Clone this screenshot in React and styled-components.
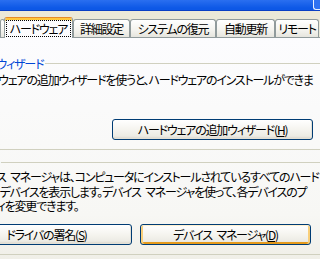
import React from 'react'
import styled, { createGlobalStyle } from 'styled-components'

const GlobalStyle = createGlobalStyle`
  html, body {
    margin: 0;
    padding: 0;
    background: #ece9d8;
  }
  * {
    box-sizing: border-box;
  }
`

// the dialog is cropped on the left: how far its groups reach past the edge
const CROP = 100

const Frame = styled.div`
  width: 320px;
  height: 259px;
  overflow: hidden;
  display: flex;
  flex-direction: column;
  background: #ece9d8;
  font-family: "Noto Sans CJK JP", "Noto Sans", sans-serif;
  font-size: 12px;
  font-feature-settings: "palt";
  letter-spacing: -1.2px;
  word-spacing: 3px;
  color: #000;
`

const CaptionBar = styled.div`
  height: 11px;
  flex: none;
  display: flex;
  justify-content: flex-end;
  align-items: flex-start;
  background: linear-gradient(180deg, #2a6ff0 0%, #0d58e6 80%);
  border-bottom: 1px solid #0a3fc4;
`

const CaptionButton = styled.div`
  width: 8px;
  height: 10px;
  margin-right: -1px;
  border-left: 1px solid #e8efff;
  border-bottom: 1px solid #e8efff;
  border-bottom-left-radius: 3px;
  background: #2f72f2;
`

const TabStrip = styled.div`
  height: 20px;
  margin-top: 6px;
  flex: none;
  display: flex;
  align-items: flex-end;
`

const Tab = styled.div`
  width: ${p => p.$width}px;
  height: ${p => (p.$active ? 21 : 18)}px;
  flex: none;
  display: flex;
  align-items: center;
  justify-content: center;
  white-space: nowrap;
  overflow: hidden;
  border: 1px solid #919b9c;
  border-bottom: none;
  border-radius: 3px 3px 0 0;
  background: linear-gradient(180deg, #ffffff 0%, #f4f3ee 60%, #e6e5de 100%);

  ${p =>
    p.$active &&
    `
    position: relative;
    z-index: 1;
    margin-left: -1px;
    margin-bottom: -1px;
    border-top: 1px solid #e68b2c;
    box-shadow: inset 0 2px 0 #ffc73c;
    background: #fcfcfe;
    padding-top: 1px;
  `}
`

const FocusLabel = styled.span`
  display: block;
  width: 65px;
  height: 17px;
  line-height: 15px;
  text-align: center;
  border: 1px dotted #000;
`

const Panel = styled.div`
  flex: 1;
  display: flex;
  flex-direction: column;
  border-top: 1px solid #919b9c;
  background: linear-gradient(180deg, #fcfcfe 0%, #f7f7f4 80%, #f0efe8 100%);
`

const Group = styled.div`
  margin: ${p => p.$top}px -6px 0 -${CROP}px;
  padding-right: ${p => p.$right + 6}px;
  border-bottom: 1px solid #d0d0bf;
  display: flex;
  flex-direction: column;
`

const GroupHeader = styled.div`
  height: 15px;
  display: flex;
  align-items: center;
  margin-right: -${p => p.$right + 6}px;
`

const Legend = styled.span`
  margin-left: 7px;
  padding-right: 2px;
  color: #0046d5;
  white-space: nowrap;
  line-height: 15px;
`

const Rule = styled.div`
  flex: 1;
  height: 1px;
  background: #d0d0bf;
`

const Description = styled.p`
  margin: ${p => p.$top}px 0 0 ${p => p.$indent}px;
  line-height: 14.5px;
  white-space: nowrap;
`

const ButtonRow = styled.div`
  margin-top: ${p => p.$top}px;
  padding-bottom: 9px;
  display: flex;
  justify-content: flex-end;
  gap: 8px;
`

const Button = styled.button`
  width: ${p => p.$width}px;
  height: 21px;
  padding: 0;
  flex: none;
  font: inherit;
  letter-spacing: inherit;
  word-spacing: inherit;
  color: #000;
  white-space: nowrap;
  border: 1px solid #003c74;
  border-radius: 3px;
  background: linear-gradient(180deg, #ffffff 0%, #f5f4ef 50%, #ecebe4 85%, #d8d2c6 100%);
  box-shadow: ${p =>
    p.$hot
      ? 'inset 0 1px 0 #fff0cf, inset 2px 0 0 #f9cf7a, inset -2px 0 0 #f9cf7a, inset 0 -2px 0 #e59a1c'
      : 'inset -1px -1px 0 #e3e0d6'};

  u {
    text-decoration: underline;
    text-underline-offset: 1px;
  }
`

export default function App() {
  return (
    <Frame>
      <GlobalStyle />
      <CaptionBar>
        <CaptionButton />
      </CaptionBar>

      <TabStrip>
        <Tab $width={5} />
        <Tab $width={69} $active>
          <FocusLabel>ハードウェア</FocusLabel>
        </Tab>
        <Tab $width={57}>詳細設定</Tab>
        <Tab $width={86}>システムの復元</Tab>
        <Tab $width={59}>自動更新</Tab>
        <Tab $width={44}>リモート</Tab>
      </TabStrip>

      <Panel>
        <Group $top={18} $right={7}>
          <GroupHeader $right={7}>
            <Legend>ハードウェアの追加ウィザード</Legend>
            <Rule />
          </GroupHeader>
          <Description $top={2} $indent={CROP - 31}>
            ハードウェアの追加ウィザードを使うと、ハードウェアのインストールができま
            <br />
            す。
          </Description>
          <ButtonRow $top={17}>
            <Button $width={201}>
              ハードウェアの追加ウィザード(<u>H</u>)
            </Button>
          </ButtonRow>
        </Group>

        <Group $top={5} $right={9}>
          <GroupHeader $right={9}>
            <Legend>デバイス マネージャ</Legend>
            <Rule />
          </GroupHeader>
          <Description $top={0} $indent={CROP - 33}>
            デバイス マネージャは、コンピュータにインストールされているすべてのハード
            <br />
            ウェア デバイスを表示します。デバイス マネージャを使って、各デバイスのプ
            <br />
            ロパティを変更できます。
          </Description>
          <ButtonRow $top={10}>
            <Button $width={171}>
              ドライバの署名(<u>S</u>)
            </Button>
            <Button $width={171} $hot>
              デバイス マネージャ(<u>D</u>)
            </Button>
          </ButtonRow>
        </Group>
      </Panel>
    </Frame>
  )
}
